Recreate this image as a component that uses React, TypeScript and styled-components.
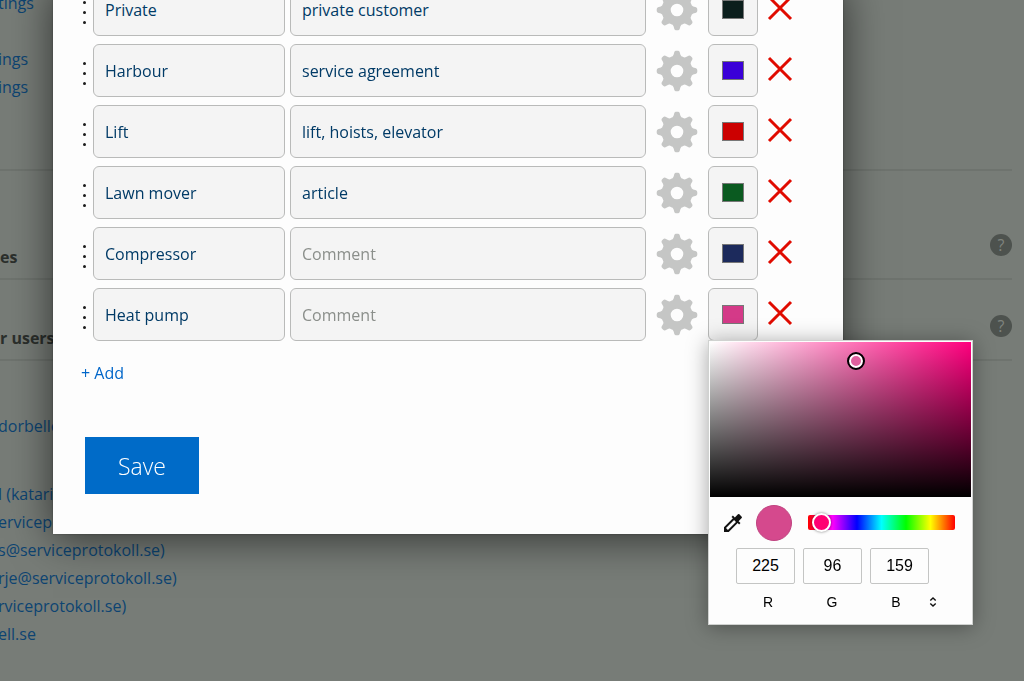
import React, { useState } from "react";
import styled, { createGlobalStyle } from "styled-components";
import { MdColorize } from "react-icons/md";

const GlobalStyle = createGlobalStyle`
  *, *::before, *::after { box-sizing: border-box; }
  html, body { margin: 0; height: 100%; overflow: hidden; background: #777c77; }
  body, button, input { font-family: "Open Sans", "Liberation Sans", sans-serif; font-size: 16px; }
`;

const Page = styled.main`
  padding-right: 12px;
  overflow: hidden;
`;

const LinkSection = styled.section`
  display: flow-root;
  height: 171px;
  border-bottom: 2px solid #6e736e;
`;

const LinkList = styled.ul<{ $top: number }>`
  list-style: none;
  margin: ${(p) => p.$top}px 0 0 -2px;
  padding: 0;
`;

const LinkItem = styled.li<{ $before?: number }>`
  padding-top: ${(p) => p.$before ?? 0}px;
  line-height: 28px;
  white-space: nowrap;
`;

const PageLink = styled.a`
  color: #0d4472;
  text-decoration: none;
`;

const HelpSection = styled.section<{ $height: number }>`
  height: ${(p) => p.$height}px;
  padding-bottom: 9px;
  border-bottom: 2px solid #6e736e;
  display: flex;
  align-items: flex-end;
  justify-content: space-between;
`;

const SectionTitle = styled.h2`
  margin: 0;
  font-size: 16px;
  line-height: 24px;
  font-weight: 700;
  color: #2b2f2c;
`;

const HelpButton = styled.button`
  width: 22px;
  height: 22px;
  margin-bottom: 13px;
  padding: 0;
  border: 0;
  border-radius: 50%;
  background: #4d524e;
  color: #7f847f;
  line-height: 22px;
`;

const Overlay = styled.div`
  position: fixed;
  inset: 0;
  padding: 0 181px 0 53px;
`;

const Modal = styled.form`
  padding: 0 41px 40px 30px;
  background: #fdfdfd;
  box-shadow: 0 4px 40px rgba(0, 0, 0, 0.6), 0 0 2px rgba(0, 0, 0, 0.3);
`;

const Rows = styled.div`
  display: flex;
  flex-direction: column;
  gap: 8px;
  margin-top: -17px;
`;

const Row = styled.div`
  display: flex;
  height: 53px;
`;

const Handle = styled.span`
  width: 10px;
  padding: 6px 0 0;
  display: flex;
  flex-direction: column;
  justify-content: center;
  gap: 7px;
`;

const Dot = styled.i`
  width: 3px;
  height: 3px;
  border-radius: 50%;
  background: #1c1c1c;
`;

const Field = styled.input<{ $wide?: boolean }>`
  flex: ${(p) => (p.$wide ? "1 1 0" : "0 0 192px")};
  min-width: 0;
  margin-left: ${(p) => (p.$wide ? 5 : 0)}px;
  padding: 0 11px;
  border: 1px solid #b9bab9;
  border-radius: 6px;
  background: #f4f4f4;
  color: #003a66;
  outline: 0;
  &::placeholder { color: #8b8f8b; opacity: 1; }
`;

const IconButton = styled.button<{ $width: number }>`
  flex: 0 0 ${(p) => p.$width}px;
  padding: 0;
  border: 0;
  background: none;
  display: flex;
  align-items: center;
  justify-content: center;
`;

const DeleteButton = styled(IconButton)`
  padding-bottom: 4px;
`;

const ColorCell = styled.div`
  position: relative;
  flex: 0 0 50px;
`;

const ColorInput = styled.input`
  display: block;
  width: 100%;
  height: 100%;
  padding: 16px 13px;
  border: 1px solid #b9bab9;
  border-radius: 6px;
  background: #f4f4f4;
  &::-webkit-color-swatch-wrapper { padding: 0; }
  &::-webkit-color-swatch { border: 1px solid #777; border-radius: 0; }
`;

const AddButton = styled.button`
  display: block;
  margin: 20px 0 0 -2px;
  padding: 0;
  border: 0;
  background: none;
  color: #0066c9;
  line-height: 24px;
`;

const SaveButton = styled.button`
  display: block;
  width: 114px;
  height: 57px;
  margin: 52px 0 0 2px;
  padding: 0;
  border: 0;
  background: #006bc8;
  color: #fff;
  font-size: 23px;
  font-weight: 300;
`;

const Picker = styled.div`
  position: absolute;
  top: calc(100% - 1px);
  left: 0;
  width: 265px;
  height: 285px;
  border: 1px solid #d0d2d0;
  padding: 1px;
  background: #fdfdfd;
  box-shadow: 0 2px 20px rgba(0, 0, 0, 0.35);
  font-family: "Liberation Sans", sans-serif;
`;

const Shade = styled.div`
  position: relative;
  height: 155px;
  background:
    linear-gradient(to top, #000, transparent),
    linear-gradient(to right, #fff, transparent),
    #ff007e;
`;

const ShadeHandle = styled.span`
  position: absolute;
  left: 56%;
  top: 12%;
  width: 18px;
  height: 18px;
  margin: -9px;
  border: 2px solid #000;
  border-radius: 50%;
  background: #e1609f;
  box-shadow: inset 0 0 0 2px #fff;
`;

const HueRow = styled.div`
  display: flex;
  align-items: center;
  height: 51px;
  padding: 0 16px 0 11px;
`;

const DropperButton = styled.button`
  display: flex;
  padding: 0;
  border: 0;
  background: none;
  color: #111;
`;

const Preview = styled.span`
  flex: 0 0 36px;
  height: 36px;
  margin: 0 16px 0 11px;
  border: 1px solid #c04380;
  border-radius: 50%;
  background: #d5498d;
`;

const HueSlider = styled.input`
  flex: 1;
  min-width: 0;
  height: 15px;
  margin: 0;
  appearance: none;
  border-radius: 2px;
  background: linear-gradient(to right, #f00, #f0f, #00f, #0ff, #0f0, #ff0, #f00);
  &::-webkit-slider-thumb {
    appearance: none;
    width: 19px;
    height: 19px;
    border: 2px solid #fff;
    border-radius: 50%;
    background: #ff0072;
    box-shadow: 0 0 3px rgba(0, 0, 0, 0.5);
  }
`;

const Channels = styled.div`
  display: flex;
  gap: 8px;
  width: 193px;
  margin-left: 26px;
`;

const ChannelInput = styled.input`
  flex: 1;
  min-width: 0;
  height: 36px;
  padding: 0;
  border: 1px solid #c4c5c4;
  border-radius: 2px;
  background: #fdfdfd;
  color: #000;
  font-family: inherit;
  text-align: center;
`;

const ChannelNames = styled.div`
  display: flex;
  align-items: center;
  margin: 8px 0 0 26px;
`;

const ChannelName = styled.label`
  width: 64px;
  font-size: 14px;
  line-height: 20px;
  text-align: center;
  color: #000;
`;

const FormatButton = styled.button`
  display: flex;
  padding: 0;
  border: 0;
  background: none;
`;

function gearPath() {
  const parts: string[] = [];
  const at = (r: number, deg: number) => {
    const a = (deg * Math.PI) / 180;
    return `${(r * Math.cos(a)).toFixed(2)} ${(r * Math.sin(a)).toFixed(2)}`;
  };
  for (let i = 0; i < 8; i++) {
    const a = i * 45;
    parts.push(`${i ? "L" : "M"}${at(16.6, a - 12)}`);
    parts.push(`L${at(19.2, a - 8)}`);
    parts.push(`Q${at(20.3, a - 6)} ${at(20.3, a - 3)}`);
    parts.push(`L${at(20.3, a + 3)}`);
    parts.push(`Q${at(20.3, a + 6)} ${at(19.2, a + 8)}`);
    parts.push(`L${at(16.6, a + 12)}`);
    parts.push(`Q${at(15, a + 16)} ${at(15.4, a + 22.5)}`);
    parts.push(`Q${at(15, a + 29)} ${at(16.6, a + 33)}`);
  }
  return parts.join("") + "ZM6.3 0A6.3 6.3 0 1 0 -6.3 0A6.3 6.3 0 1 0 6.3 0Z";
}

const GEAR = gearPath();

const GearIcon = () => (
  <svg width="42" height="42" viewBox="-21 -21 42 42" aria-hidden="true">
    <path d={GEAR} fill="#c5c6c5" fillRule="evenodd" />
  </svg>
);

const CrossIcon = () => (
  <svg width="26" height="26" viewBox="0 0 26 26" aria-hidden="true">
    <path d="M2 2 24 24M24 2 2 24" stroke="#e00b00" strokeWidth="3" />
  </svg>
);

const FormatIcon = () => (
  <svg width="10" height="10" viewBox="0 0 10 10" aria-hidden="true">
    <path d="M2.3 3.6 5 1 7.7 3.6M2.3 6.4 5 9 7.7 6.4" fill="none" stroke="#111" strokeWidth="1.4" />
  </svg>
);

const categories = [
  { name: "Private", comment: "private customer", color: "#0b1e1c" },
  { name: "Harbour", comment: "service agreement", color: "#3a00d8" },
  { name: "Lift", comment: "lift, hoists, elevator", color: "#cc0000" },
  { name: "Lawn mover", comment: "article", color: "#0a5a20" },
  { name: "Compressor", comment: "", color: "#1c2a5c" },
  { name: "Heat pump", comment: "", color: "#d43a88" },
];

const channels = [
  { name: "R", value: "225" },
  { name: "G", value: "96" },
  { name: "B", value: "159" },
];

function ColorPicker() {
  const [hue, setHue] = useState(10);
  return (
    <Picker>
      <Shade>
        <ShadeHandle />
      </Shade>
      <HueRow>
        <DropperButton type="button" aria-label="Pick a colour from the page">
          <MdColorize size={24} />
        </DropperButton>
        <Preview />
        <HueSlider
          type="range"
          min={0}
          max={360}
          value={hue}
          onChange={(e) => setHue(Number(e.target.value))}
          aria-label="Hue"
        />
      </HueRow>
      <Channels>
        {channels.map((c) => (
          <ChannelInput key={c.name} id={`channel-${c.name}`} type="text" defaultValue={c.value} />
        ))}
      </Channels>
      <ChannelNames>
        {channels.map((c) => (
          <ChannelName key={c.name} htmlFor={`channel-${c.name}`}>
            {c.name}
          </ChannelName>
        ))}
        <FormatButton type="button" aria-label="Change colour format">
          <FormatIcon />
        </FormatButton>
      </ChannelNames>
    </Picker>
  );
}

const settingsLinks = [{ text: "tings" }, { text: "ings", before: 28 }, { text: "ings" }];

const userLinks = [
  { text: "dorbelle" },
  { text: "l (katari", before: 40 },
  { text: "ervicepr" },
  { text: "s@serviceprotokoll.se)" },
  { text: "rje@serviceprotokoll.se)" },
  { text: "rviceprotokoll.se)" },
  { text: "ell.se" },
];

function Links({ items, top }: { items: { text: string; before?: number }[]; top: number }) {
  return (
    <LinkList $top={top}>
      {items.map((item, i) => (
        <LinkItem key={i} $before={item.before}>
          <PageLink href="#">{item.text}</PageLink>
        </LinkItem>
      ))}
    </LinkList>
  );
}

export default function App() {
  return (
    <>
      <GlobalStyle />
      <Page>
        <LinkSection>
          <Links items={settingsLinks} top={-11} />
        </LinkSection>
        <HelpSection $height={109}>
          <SectionTitle>es</SectionTitle>
          <HelpButton type="button" aria-label="Help">?</HelpButton>
        </HelpSection>
        <HelpSection $height={81}>
          <SectionTitle>r users</SectionTitle>
          <HelpButton type="button" aria-label="Help">?</HelpButton>
        </HelpSection>
        <Links items={userLinks} top={51} />
      </Page>
      <Overlay>
        <Modal onSubmit={(e) => e.preventDefault()}>
          <Rows>
            {categories.map((c, i) => (
              <Row key={c.name}>
                <Handle>
                  <Dot />
                  <Dot />
                  <Dot />
                </Handle>
                <Field type="text" defaultValue={c.name} aria-label="Name" />
                <Field $wide type="text" defaultValue={c.comment} placeholder="Comment" aria-label="Comment" />
                <IconButton $width={62} type="button" aria-label="Settings">
                  <GearIcon />
                </IconButton>
                <ColorCell>
                  <ColorInput type="color" defaultValue={c.color} aria-label="Colour" />
                  {i === categories.length - 1 && <ColorPicker />}
                </ColorCell>
                <DeleteButton $width={44} type="button" aria-label="Delete">
                  <CrossIcon />
                </DeleteButton>
              </Row>
            ))}
          </Rows>
          <AddButton type="button">+ Add</AddButton>
          <SaveButton type="submit">Save</SaveButton>
        </Modal>
      </Overlay>
    </>
  );
}
